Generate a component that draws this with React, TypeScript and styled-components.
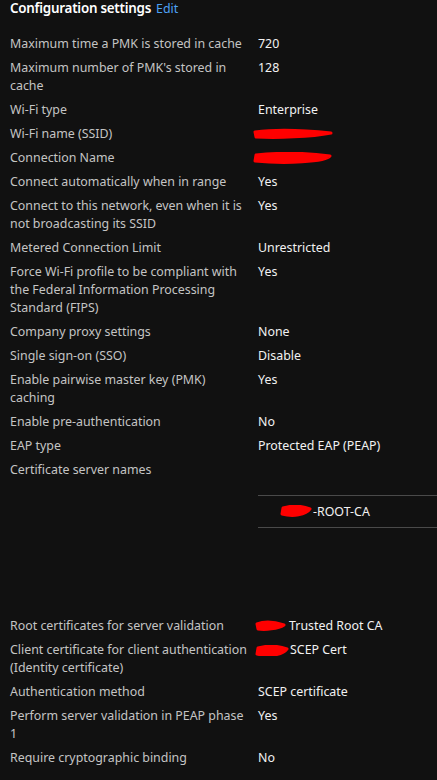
import React from 'react';
import styled, { createGlobalStyle } from 'styled-components';

const GlobalStyle = createGlobalStyle`
  html, body {
    margin: 0;
    padding: 0;
    background: #111111;
  }
  body {
    font-family: "Segoe UI", "Noto Sans", "Open Sans", sans-serif;
  }
`;

const Page = styled.div`
  width: 437px;
  height: 780px;
  overflow: hidden;
  background: #111111;
  padding-left: 10px;
  box-sizing: border-box;
`;

const Header = styled.div`
  display: flex;
  align-items: baseline;
  gap: 5px;
  height: 20px;
  margin-top: -2px;
  margin-bottom: 14px;
`;

const Title = styled.span`
  font-size: 13.4px;
  font-weight: 600;
  letter-spacing: -0.25px;
  color: #ffffff;
  line-height: 20px;
`;

const EditLink = styled.a`
  font-size: 12.4px;
  color: #4ea1f5;
  line-height: 20px;
  cursor: pointer;
`;

const Grid = styled.div`
  display: grid;
  grid-template-columns: 240px 1fr;
  column-gap: 8px;
`;

const Label = styled.div`
  font-size: 12.4px;
  line-height: 18px;
  color: #c4c4c4;
  padding: 3px 0;
`;

const Value = styled.div`
  font-size: 12.4px;
  line-height: 18px;
  color: #f2f2f2;
  padding: 3px 0;
  display: flex;
  align-items: center;
  align-self: start;
  height: 18px;
`;

const CertList = styled.div`
  padding: 37px 0 86px;
`;

const CertItem = styled.div`
  display: flex;
  align-items: center;
  height: 31px;
  padding-left: 25px;
  border-top: 1px solid #4a4a4a;
  border-bottom: 1px solid #4a4a4a;
  font-size: 12.4px;
  color: #f2f2f2;
`;

// rough red marker strokes that hide names in the original
const Scribble: React.FC<{ width: number; height?: number; variant?: number }> = ({ width, height = 12, variant = 0 }) => {
  const paths = [
    `M2 4 C ${width * 0.3} 1, ${width * 0.6} 2, ${width - 4} 5 C ${width * 0.7} 9, ${width * 0.3} 10, 3 9 Z`,
    `M3 3 C ${width * 0.4} 0, ${width * 0.7} 1, ${width - 2} 4 C ${width - 6} 10, ${width * 0.4} 12, 2 9 Z`,
  ];
  return (
    <svg width={width} height={height} viewBox={`0 0 ${width} ${height}`} style={{ display: 'block' }}>
      <path d={paths[variant % 2]} fill="#ff0000" stroke="#ff0000" strokeWidth={3} strokeLinejoin="round" />
    </svg>
  );
};

const Hidden = styled.span`
  display: inline-flex;
  margin-right: 1px;
  margin-left: -3px;
`;

type Row = { label: string; value?: React.ReactNode };

const rows: Row[] = [
  { label: 'Maximum time a PMK is stored in cache', value: '720' },
  { label: "Maximum number of PMK's stored in cache", value: '128' },
  { label: 'Wi-Fi type', value: 'Enterprise' },
  { label: 'Wi-Fi name (SSID)', value: <Hidden style={{ marginLeft: -5 }}><Scribble width={82} /></Hidden> },
  { label: 'Connection Name', value: <Hidden style={{ marginLeft: -5 }}><Scribble width={79} height={13} variant={1} /></Hidden> },
  { label: 'Connect automatically when in range', value: 'Yes' },
  { label: 'Connect to this network, even when it is not broadcasting its SSID', value: 'Yes' },
  { label: 'Metered Connection Limit', value: 'Unrestricted' },
  { label: 'Force Wi-Fi profile to be compliant with the Federal Information Processing Standard (FIPS)', value: 'Yes' },
  { label: 'Company proxy settings', value: 'None' },
  { label: 'Single sign-on (SSO)', value: 'Disable' },
  { label: 'Enable pairwise master key (PMK) caching', value: 'Yes' },
  { label: 'Enable pre-authentication', value: 'No' },
  { label: 'EAP type', value: 'Protected EAP (PEAP)' },
];

const tailRows: Row[] = [
  {
    label: 'Root certificates for server validation',
    value: (
      <>
        <Hidden><Scribble width={33} height={12} /></Hidden>Trusted Root CA
      </>
    ),
  },
  {
    label: 'Client certificate for client authentication (Identity certificate)',
    value: (
      <>
        <Hidden><Scribble width={34} height={11} variant={1} /></Hidden>SCEP Cert
      </>
    ),
  },
  { label: 'Authentication method', value: 'SCEP certificate' },
  { label: 'Perform server validation in PEAP phase 1', value: 'Yes' },
  { label: 'Require cryptographic binding', value: 'No' },
];

const renderRows = (list: Row[]) =>
  list.map((r) => (
    <React.Fragment key={r.label}>
      <Label>{r.label}</Label>
      <Value>{r.value}</Value>
    </React.Fragment>
  ));

export default function App() {
  return (
    <>
      <GlobalStyle />
      <Page>
        <Header>
          <Title>Configuration settings</Title>
          <EditLink>Edit</EditLink>
        </Header>
        <Grid>
          {renderRows(rows)}
          <Label>Certificate server names</Label>
          <CertList>
            <CertItem>
              <Hidden><Scribble width={32} height={13} variant={1} /></Hidden>-ROOT-CA
            </CertItem>
          </CertList>
          {renderRows(tailRows)}
        </Grid>
      </Page>
    </>
  );
}
